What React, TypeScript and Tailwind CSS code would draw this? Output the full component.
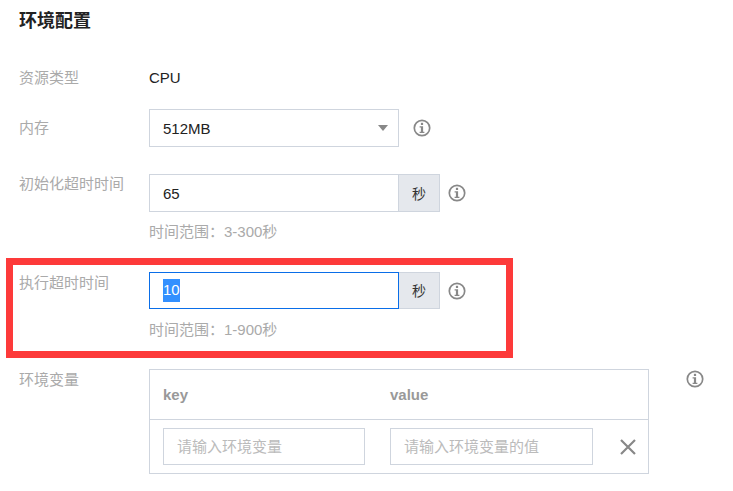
const FONT = "font-['Liberation_Sans','Noto_Sans_CJK_SC',sans-serif]";

function Info() {
  return (
    <svg width="18" height="18" viewBox="0 0 18 18" fill="none" className="block shrink-0">
      <circle cx="9" cy="9" r="7.7" stroke="#888" strokeWidth="1.7" />
      <rect x="7.9" y="3.8" width="2.2" height="2.2" fill="#888" />
      <path d="M6.6 7.3H10.1V12.8H11.4V14H6.6V12.8H7.9V8.5H6.6Z" fill="#888" />
    </svg>
  );
}

function Label({ children, className = "" }: { children: React.ReactNode; className?: string }) {
  return <div className={`w-[130px] shrink-0 text-[15px] leading-[20px] text-[#aaa] ${className}`}>{children}</div>;
}

function Unit() {
  return (
    <div className="w-[42px] -ml-px h-full flex items-center justify-center bg-[#e5e8ed] border border-[#cfd5de] pt-[2px] text-[14px] text-[#333]">
      秒
    </div>
  );
}

export default function App() {
  return (
    <div className={`${FONT} relative w-[733px] h-[491px] overflow-hidden bg-white pl-[19px]`}>
      <h2 className="pt-[9px] text-[18px] leading-[24px] font-bold text-[#222]">环境配置</h2>

      <div className="mt-[35px] flex h-[20px] items-center">
        <Label>资源类型</Label>
        <span className="text-[15px] text-[#222]">CPU</span>
      </div>

      <div className="mt-[21px] flex items-center">
        <Label>内存</Label>
        <div className="w-[250px] h-[38px] flex items-center justify-between border border-[#cfd5de] pl-[13px] pr-[10px] text-[15px] text-[#222]">
          <span className="pt-[2px]">512MB</span>
          <span className="w-0 h-0 border-x-[5px] border-x-transparent border-t-[6px] border-t-[#888]" />
        </div>
        <div className="ml-[14px]"><Info /></div>
      </div>

      <div className="mt-[27px] flex items-start">
        <Label>初始化超时时间</Label>
        <div>
          <div className="flex items-center h-[38px]">
            <div className="w-[250px] h-full flex items-center border border-[#cfd5de] pl-[13px] pt-[2px] text-[15px] text-[#222]">65</div>
            <Unit />
            <div className="ml-[8px]"><Info /></div>
          </div>
          <div className="mt-[10px] text-[15px] leading-[20px] text-[#aaa]">时间范围：3-300秒</div>
        </div>
      </div>

      <div className="mt-[30px] flex items-start">
        <Label className="pt-[1px]">执行超时时间</Label>
        <div>
          <div className="flex items-center h-[37px]">
            <div className="relative z-10 w-[250px] h-full flex items-center border border-[#0a6ee8] pl-[13px] text-[15px]">
              <span className="bg-[#3390ff] text-white">10</span>
            </div>
            <Unit />
            <div className="ml-[8px] pt-[1px]"><Info /></div>
          </div>
          <div className="mt-[11px] text-[15px] leading-[20px] text-[#aaa]">时间范围：1-900秒</div>
        </div>
      </div>

      <div className="mt-[29px] flex items-start">
        <Label className="pt-[1px]">环境变量</Label>
        <div className="w-[500px] border border-[#cfd5de]">
          <div className="flex h-[50px] items-center border-b border-[#cfd5de] pl-[13px] pt-[2px] text-[15px] font-bold text-[#999]">
            <span className="w-[227px]">key</span>
            <span>value</span>
          </div>
          <div className="flex h-[53px] items-center pl-[13px]">
            <input readOnly placeholder="请输入环境变量" className="w-[202px] h-[37px] border border-[#cfd5de] px-[13px] text-[15px] outline-none placeholder:text-[#bbb]" />
            <input readOnly placeholder="请输入环境变量的值" className="ml-[25px] w-[203px] h-[37px] border border-[#cfd5de] px-[13px] text-[15px] outline-none placeholder:text-[#bbb]" />
            <svg width="18" height="18" viewBox="0 0 18 18" className="ml-[26px]">
              <path d="M2 2L16 16M16 2L2 16" stroke="#888" strokeWidth="2.2" />
            </svg>
          </div>
        </div>
        <div className="ml-[37px] mt-[1px]"><Info /></div>
      </div>

      <div className="absolute left-[6px] top-[258px] w-[507px] h-[100px] border-[7px] border-[#fd3a3a]" />
    </div>
  );
}
